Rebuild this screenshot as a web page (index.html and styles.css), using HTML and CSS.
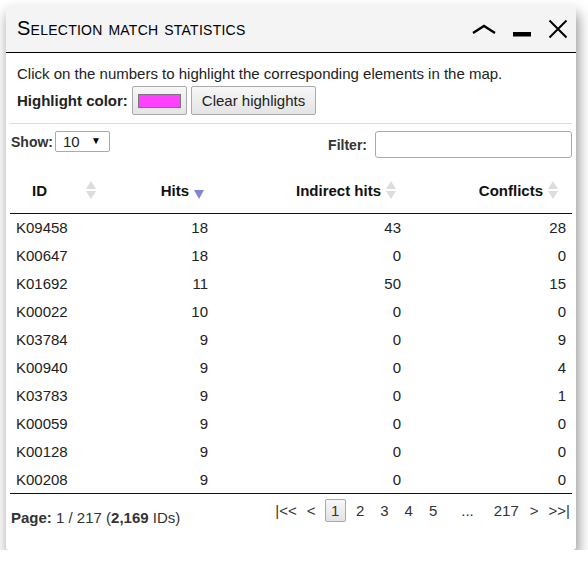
FILE: index.html
```html
<!doctype html>
<html lang="en">
<head>
    <meta charset="UTF-8">
    <meta name="viewport" content="width=device-width, initial-scale=1.0">
    <title>Selection match statistics</title>
    <link rel="stylesheet" href="styles.css">
</head>
<body>
    <div class="dialog">
        <div class="dialog-title">
            <h2>Selection match statistics</h2>
            <div class="title-tools">
                <span class="tool">
                    <svg width="24" height="12" viewBox="0 0 24 12"><path d="M1 10 L12 3 L23 10" fill="none" stroke="#000" stroke-width="2.4"/></svg>
                </span>
                <span class="tool">
                    <svg width="20" height="20" viewBox="0 0 20 20"><rect x="1" y="13" width="18" height="4.5" fill="#000"/></svg>
                </span>
                <span class="tool">
                    <svg width="20" height="20" viewBox="0 0 20 20"><path d="M1.5 1.5 L18.5 18.5 M18.5 1.5 L1.5 18.5" fill="none" stroke="#000" stroke-width="2"/></svg>
                </span>
            </div>
        </div>

        <div class="dialog-body">
            <div class="intro">
                <p>Click on the numbers to highlight the corresponding elements in the map.</p>
                <div class="highlight-row">
                    <b>Highlight color:</b>
                    <button class="btn color-btn"><span class="swatch"></span></button>
                    <button class="btn">Clear highlights</button>
                </div>
            </div>

            <div class="controls">
                <label class="show">
                    <b>Show:</b>
                    <span class="select-box">
                        <select>
                            <option>10</option>
                            <option>25</option>
                            <option>50</option>
                        </select>
                        <span class="select-arrow">&#9660;</span>
                    </span>
                </label>
                <label class="filter">
                    <b>Filter:</b>
                    <input type="text">
                </label>
            </div>

            <table class="stats">
                <colgroup>
                    <col class="c-id">
                    <col class="c-hits">
                    <col class="c-ind">
                    <col class="c-conf">
                </colgroup>
                <thead>
                    <tr>
                        <th><div class="th-in th-id">ID <span class="sort"></span></div></th>
                        <th><div class="th-in">Hits <span class="sort-desc"></span></div></th>
                        <th><div class="th-in">Indirect hits <span class="sort"></span></div></th>
                        <th><div class="th-in th-last">Conflicts <span class="sort"></span></div></th>
                    </tr>
                </thead>
                <tbody id="rows"></tbody>
            </table>

            <div class="table-foot">
                <div class="page-info"><b>Page:</b> 1 / 217 (<b>2,169</b> IDs)</div>
                <div class="pager">
                    <a>|&lt;&lt;</a>
                    <a>&lt;</a>
                    <a class="current">1</a>
                    <a class="pg">2</a>
                    <a class="pg">3</a>
                    <a class="pg">4</a>
                    <a class="pg">5</a>
                    <span class="dots">...</span>
                    <a class="pg pg-last">217</a>
                    <a>&gt;</a>
                    <a class="end">&gt;&gt;|</a>
                </div>
            </div>
        </div>
    </div>

    <script>
        // 表格数据
        let data = [
            ['K09458', 18, 43, 28],
            ['K00647', 18, 0, 0],
            ['K01692', 11, 50, 15],
            ['K00022', 10, 0, 0],
            ['K03784', 9, 0, 9],
            ['K00940', 9, 0, 4],
            ['K03783', 9, 0, 1],
            ['K00059', 9, 0, 0],
            ['K00128', 9, 0, 0],
            ['K00208', 9, 0, 0]
        ];
        let rows = document.querySelector('#rows');
        let html = '';
        for (let i = 0; i < data.length; i++) {
            html += '<tr><td>' + data[i][0] + '</td><td class="num">' + data[i][1] +
                '</td><td class="num">' + data[i][2] + '</td><td class="num">' + data[i][3] + '</td></tr>';
        }
        rows.innerHTML = html;
    </script>
</body>
</html>
```

FILE: styles.css
```css
* {
    margin: 0;
    padding: 0;
    box-sizing: border-box;
}

body {
    font-family: "Liberation Sans", Arial, sans-serif;
    color: #222;
    background: #fff;
}

.dialog {
    margin: 5px 0 0 6px;
    width: 570px;
    height: 545px;
    background: #fff;
    border-radius: 3px;
    box-shadow: 2px 8px 14px rgba(0, 0, 0, 0.45);
    overflow: hidden;
}

.dialog-title {
    display: flex;
    align-items: center;
    justify-content: space-between;
    height: 48px;
    padding: 0 8px 0 11px;
    background: #f4f4f4;
    border-bottom: 1px solid #000;
}

.dialog-title h2 {
    font-size: 20px;
    font-weight: 400;
    font-variant: small-caps;
    letter-spacing: 0.25px;
    color: #000;
}

.title-tools {
    display: flex;
    align-items: center;
}

.tool {
    display: block;
    margin-left: 16px;
}

.tool svg {
    display: block;
}

.dialog-body {
    padding: 0 4px;
}

.intro {
    padding: 12px 0 8px 7px;
    border-bottom: 1px solid #ddd;
    font-size: 15px;
}

.intro p {
    line-height: 18px;
}

.highlight-row {
    display: flex;
    align-items: center;
    margin-top: 3px;
    font-size: 15px;
}

.btn {
    height: 29px;
    padding: 0 10px;
    margin-left: 4px;
    border: 1px solid #aaa;
    border-radius: 2px;
    background: linear-gradient(#f7f7f7, #e4e4e4);
    font: 15px "Liberation Sans", Arial, sans-serif;
    color: #222;
}

.highlight-row .color-btn {
    margin-left: 4px;
    padding: 0 5px;
}

.swatch {
    display: block;
    width: 43px;
    height: 14px;
    background: #ff40ff;
    border: 1px solid #777;
}

.controls {
    display: flex;
    justify-content: space-between;
    align-items: flex-start;
    padding-top: 7px;
    font-size: 14px;
    color: #333;
}

.show,
.filter {
    display: flex;
    align-items: center;
}

.show {
    padding: 0 0 0 1px;
    height: 21px;
}

.select-box {
    position: relative;
    margin-left: 2px;
}

.select-box select {
    display: block;
    width: 55px;
    height: 21px;
    padding-left: 7px;
    border: 1px solid #aaa;
    border-radius: 2px;
    background: #fff;
    font: 15px "Liberation Sans", Arial, sans-serif;
    color: #222;
    appearance: none;
    -webkit-appearance: none;
    outline: none;
}

.select-arrow {
    position: absolute;
    right: 9px;
    top: 4px;
    font-size: 10px;
    color: #000;
    pointer-events: none;
}

.filter {
    height: 27px;
}

.filter input {
    width: 197px;
    height: 27px;
    margin-left: 8px;
    border: 1px solid #aaa;
    border-radius: 3px;
    outline: none;
    font-size: 14px;
}

.stats {
    width: 562px;
    margin-top: 9px;
    border-collapse: collapse;
    font-size: 15px;
}

.c-id { width: 100px; }
.c-hits { width: 104px; }
.c-ind { width: 193px; }
.c-conf { width: 165px; }

.stats th {
    padding: 14px 0;
    border-bottom: 1px solid #111;
    font-weight: 700;
    color: #111;
}

.th-in {
    display: flex;
    align-items: center;
    justify-content: flex-end;
    gap: 5px;
    height: 18px;
    padding-right: 10px;
}

.th-id {
    justify-content: space-between;
    padding: 0 13px 0 22px;
}

.th-last {
    padding-right: 13px;
}

.sort {
    display: block;
    width: 11px;
    height: 18px;
    position: relative;
}

.sort:before,
.sort:after {
    content: "";
    position: absolute;
    left: 0;
    border-left: 5.5px solid transparent;
    border-right: 5.5px solid transparent;
}

.sort:before {
    top: 0;
    border-bottom: 8px solid #ddd;
}

.sort:after {
    bottom: 0;
    border-top: 8px solid #ddd;
}

.sort-desc {
    display: block;
    width: 0;
    height: 0;
    margin-top: 9px;
    border-left: 5px solid transparent;
    border-right: 5px solid transparent;
    border-top: 9px solid #7b86d8;
}

.stats td {
    height: 28px;
    padding: 0 6px;
    color: #222;
}

.stats td.num {
    text-align: right;
}

.stats tbody tr:last-child td {
    border-bottom: 1px solid #111;
}

.table-foot {
    display: flex;
    justify-content: space-between;
    align-items: flex-start;
    width: 562px;
}

.page-info {
    margin: 15px 0 0 1px;
    font-size: 15px;
    color: #333;
}

.pager {
    display: flex;
    align-items: center;
    margin-top: 5px;
    padding-right: 2px;
    font-size: 15px;
    color: #333;
}

.pager a {
    display: block;
    padding: 2px 5px;
    line-height: 19px;
    cursor: pointer;
}

.pager a.pg {
    padding: 2px 8px;
}

.pager a.pg-last {
    padding-right: 6px;
}

.pager a.end {
    padding-right: 0;
}

.pager a.current {
    margin: 0 2px 0 4px;
    padding: 1px 5.5px;
    border: 1px solid #aaa;
    border-radius: 2px;
    background: linear-gradient(#f7f7f7, #e2e2e2);
}

.pager .dots {
    padding: 0 12px 0 16px;
}
```
